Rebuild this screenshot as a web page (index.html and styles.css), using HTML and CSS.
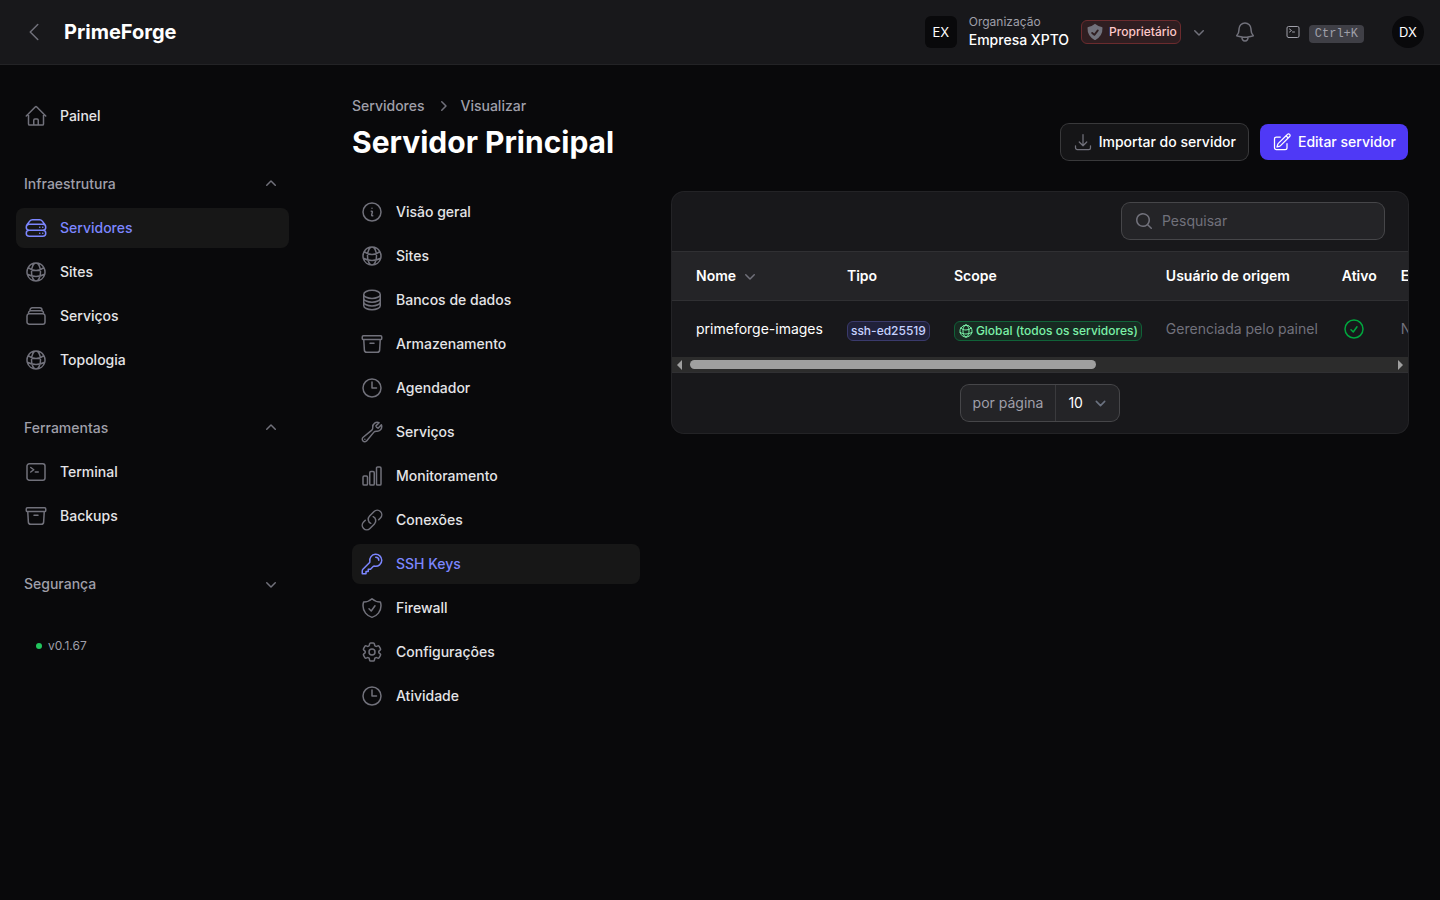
FILE: index.html
```html
<!DOCTYPE html>
<html lang="pt-BR">
<head>
  <meta charset="utf-8">
  <meta name="viewport" content="width=device-width, initial-scale=1.0">
  <title>Servidor Principal - PrimeForge</title>
  <link rel="stylesheet" href="styles.css">
</head>
<body>
  <!-- Icons -->
  <svg class="sprite" aria-hidden="true">
    <symbol id="i-home" viewBox="0 0 24 24"><path d="m2.25 12 8.954-8.955c.44-.439 1.152-.439 1.591 0L21.75 12M4.5 9.75v10.125c0 .621.504 1.125 1.125 1.125H9.75v-4.875c0-.621.504-1.125 1.125-1.125h2.25c.621 0 1.125.504 1.125 1.125V21h4.125c.621 0 1.125-.504 1.125-1.125V9.75M8.25 21h8.25"/></symbol>
    <symbol id="i-server" viewBox="0 0 24 24"><path d="M5.25 14.25h13.5m-13.5 0a3 3 0 0 1-3-3m3 3a3 3 0 1 0 0 6h13.5a3 3 0 1 0 0-6m-16.5-3a3 3 0 0 1 3-3h13.5a3 3 0 0 1 3 3m-19.5 0a4.5 4.5 0 0 1 .9-2.7L5.737 5.1a3.375 3.375 0 0 1 2.7-1.35h7.126c1.062 0 2.062.5 2.7 1.35l2.587 3.45a4.5 4.5 0 0 1 .9 2.7m0 0a3 3 0 0 1-3 3m0 3h.008v.008h-.008v-.008Zm0-6h.008v.008h-.008v-.008Zm-3 6h.008v.008h-.008v-.008Zm0-6h.008v.008h-.008v-.008Z"/></symbol>
    <symbol id="i-globe" viewBox="0 0 24 24"><path d="M12 21a9.004 9.004 0 0 0 8.716-6.747M12 21a9.004 9.004 0 0 1-8.716-6.747M12 21c2.485 0 4.5-4.03 4.5-9S14.485 3 12 3m0 18c-2.485 0-4.5-4.03-4.5-9S9.515 3 12 3m0 0a8.997 8.997 0 0 1 7.843 4.582M12 3a8.997 8.997 0 0 0-7.843 4.582m15.686 0A11.953 11.953 0 0 1 12 10.5c-2.998 0-5.74-1.1-7.843-2.918m15.686 0A8.959 8.959 0 0 1 21 12c0 .778-.099 1.533-.284 2.253m0 0A17.919 17.919 0 0 1 12 16.5c-3.162 0-6.133-.815-8.716-2.247m0 0A9.015 9.015 0 0 1 3 12c0-1.605.42-3.113 1.157-4.418"/></symbol>
    <symbol id="i-stack" viewBox="0 0 24 24"><path d="M6 6.878V6a2.25 2.25 0 0 1 2.25-2.25h7.5A2.25 2.25 0 0 1 18 6v.878m-12 0c.235-.083.487-.128.75-.128h10.5c.263 0 .515.045.75.128m-12 0A2.25 2.25 0 0 0 4.5 9v.878m13.5-3A2.25 2.25 0 0 1 19.5 9v.878m0 0a2.246 2.246 0 0 0-.75-.128H5.25c-.263 0-.515.045-.75.128m15 0A2.25 2.25 0 0 1 21 12v6a2.25 2.25 0 0 1-2.25 2.25H5.25A2.25 2.25 0 0 1 3 18v-6c0-.98.626-1.813 1.5-2.122"/></symbol>
    <symbol id="i-terminal" viewBox="0 0 24 24"><path d="m6.75 7.5 3 2.25-3 2.25m4.5 0h3m-9 8.25h13.5A2.25 2.25 0 0 0 21 18V6a2.25 2.25 0 0 0-2.25-2.25H5.25A2.25 2.25 0 0 0 3 6v12a2.25 2.25 0 0 0 2.25 2.25Z"/></symbol>
    <symbol id="i-archive" viewBox="0 0 24 24"><path d="m20.25 7.5-.625 10.632a2.25 2.25 0 0 1-2.247 2.118H6.622a2.25 2.25 0 0 1-2.247-2.118L3.75 7.5M10 11.25h4M3.375 7.5h17.25c.621 0 1.125-.504 1.125-1.125v-1.5c0-.621-.504-1.125-1.125-1.125H3.375c-.621 0-1.125.504-1.125 1.125v1.5c0 .621.504 1.125 1.125 1.125Z"/></symbol>
    <symbol id="i-info" viewBox="0 0 24 24"><path d="m11.25 11.25.041-.02a.75.75 0 0 1 1.063.852l-.708 2.836a.75.75 0 0 0 1.063.853l.041-.021M21 12a9 9 0 1 1-18 0 9 9 0 0 1 18 0Zm-9-3.75h.008v.008H12V8.25Z"/></symbol>
    <symbol id="i-database" viewBox="0 0 24 24"><path d="M20.25 6.375c0 2.278-3.694 4.125-8.25 4.125S3.75 8.653 3.75 6.375m16.5 0c0-2.278-3.694-4.125-8.25-4.125S3.75 4.097 3.75 6.375m16.5 0v11.25c0 2.278-3.694 4.125-8.25 4.125s-8.25-1.847-8.25-4.125V6.375m16.5 0v3.75m-16.5-3.75v3.75m16.5 0v3.75C20.25 16.153 16.556 18 12 18s-8.25-1.847-8.25-4.125v-3.75m16.5 0c0 2.278-3.694 4.125-8.25 4.125s-8.25-1.847-8.25-4.125"/></symbol>
    <symbol id="i-clock" viewBox="0 0 24 24"><path d="M12 6v6h4.5m4.5 0a9 9 0 1 1-18 0 9 9 0 0 1 18 0Z"/></symbol>
    <symbol id="i-wrench" viewBox="0 0 24 24"><path d="M21.75 6.75a4.5 4.5 0 0 1-4.884 4.484c-1.076-.091-2.264.071-2.95.904l-7.152 8.684a2.548 2.548 0 1 1-3.586-3.586l8.684-7.152c.833-.686.995-1.874.904-2.95a4.5 4.5 0 0 1 6.336-4.486l-3.276 3.276a3.004 3.004 0 0 0 2.25 2.25l3.276-3.276c.256.565.398 1.192.398 1.852Z"/><path d="M4.867 19.125h.008v.008h-.008v-.008Z"/></symbol>
    <symbol id="i-chart" viewBox="0 0 24 24"><path d="M3 13.125C3 12.504 3.504 12 4.125 12h2.25c.621 0 1.125.504 1.125 1.125v6.75C7.5 20.496 6.996 21 6.375 21h-2.25A1.125 1.125 0 0 1 3 19.875v-6.75ZM9.75 8.625c0-.621.504-1.125 1.125-1.125h2.25c.621 0 1.125.504 1.125 1.125v11.25c0 .621-.504 1.125-1.125 1.125h-2.25a1.125 1.125 0 0 1-1.125-1.125V8.625ZM16.5 4.125c0-.621.504-1.125 1.125-1.125h2.25C20.496 3 21 3.504 21 4.125v15.75c0 .621-.504 1.125-1.125 1.125h-2.25a1.125 1.125 0 0 1-1.125-1.125V4.125Z"/></symbol>
    <symbol id="i-link" viewBox="0 0 24 24"><path d="M13.19 8.688a4.5 4.5 0 0 1 1.242 7.244l-4.5 4.5a4.5 4.5 0 0 1-6.364-6.364l1.757-1.757m13.35-.622 1.757-1.757a4.5 4.5 0 0 0-6.364-6.364l-4.5 4.5a4.5 4.5 0 0 0 1.242 7.244"/></symbol>
    <symbol id="i-key" viewBox="0 0 24 24"><path d="M15.75 5.25a3 3 0 0 1 3 3m3 0a6 6 0 0 1-7.029 5.912c-.563-.097-1.159.026-1.563.43L10.5 17.25H8.25v2.25H6v2.25H2.25v-2.818c0-.597.237-1.17.659-1.591l6.499-6.499c.404-.404.527-1 .43-1.563A6 6 0 1 1 21.75 8.25Z"/></symbol>
    <symbol id="i-shield" viewBox="0 0 24 24"><path d="M9 12.75 11.25 15 15 9.75m-3-7.036A11.959 11.959 0 0 1 3.598 6 11.99 11.99 0 0 0 3 9.749c0 5.592 3.824 10.29 9 11.623 5.176-1.332 9-6.03 9-11.622 0-1.31-.21-2.571-.598-3.751h-.152c-3.196 0-6.1-1.248-8.25-3.285Z"/></symbol>
    <symbol id="i-cog" viewBox="0 0 24 24"><path d="M9.594 3.94c.09-.542.56-.94 1.11-.94h2.593c.55 0 1.02.398 1.11.94l.213 1.281c.063.374.313.686.645.87.074.04.147.083.22.127.325.196.72.257 1.075.124l1.217-.456a1.125 1.125 0 0 1 1.37.49l1.296 2.247a1.125 1.125 0 0 1-.26 1.431l-1.003.827c-.293.241-.438.613-.43.992a7.723 7.723 0 0 1 0 .255c-.008.378.137.75.43.991l1.004.827c.424.35.534.955.26 1.43l-1.298 2.247a1.125 1.125 0 0 1-1.369.491l-1.217-.456c-.355-.133-.75-.072-1.076.124a6.47 6.47 0 0 1-.22.128c-.331.183-.581.495-.644.869l-.213 1.281c-.09.543-.56.94-1.11.94h-2.594c-.55 0-1.019-.398-1.11-.94l-.213-1.281c-.062-.374-.312-.686-.644-.87a6.52 6.52 0 0 1-.22-.127c-.325-.196-.72-.257-1.076-.124l-1.217.456a1.125 1.125 0 0 1-1.369-.49l-1.297-2.247a1.125 1.125 0 0 1 .26-1.431l1.004-.827c.292-.24.437-.613.43-.991a6.932 6.932 0 0 1 0-.255c.007-.38-.138-.751-.43-.992l-1.004-.827a1.125 1.125 0 0 1-.26-1.43l1.297-2.247a1.125 1.125 0 0 1 1.37-.491l1.216.456c.356.133.751.072 1.076-.124.072-.044.146-.086.22-.128.332-.183.582-.495.644-.869l.214-1.28Z"/><path d="M15 12a3 3 0 1 1-6 0 3 3 0 0 1 6 0Z"/></symbol>
    <symbol id="i-bell" viewBox="0 0 24 24"><path d="M14.857 17.082a23.848 23.848 0 0 0 5.454-1.31A8.967 8.967 0 0 1 18 9.75V9A6 6 0 0 0 6 9v.75a8.967 8.967 0 0 1-2.312 6.022c1.733.64 3.56 1.085 5.455 1.31m5.714 0a24.255 24.255 0 0 1-5.714 0m5.714 0a3 3 0 1 1-5.714 0"/></symbol>
    <symbol id="i-check-circle" viewBox="0 0 24 24"><path d="M9 12.75 11.25 15 15 9.75M21 12a9 9 0 1 1-18 0 9 9 0 0 1 18 0Z"/></symbol>
    <symbol id="i-back" viewBox="0 0 24 24"><path d="M15.75 19.5 8.25 12l7.5-7.5"/></symbol>
    <symbol id="i-download" viewBox="0 0 24 24"><path d="M3 16.5v2.25A2.25 2.25 0 0 0 5.25 21h13.5A2.25 2.25 0 0 0 21 18.75V16.5M16.5 12 12 16.5m0 0L7.5 12m4.5 4.5V3"/></symbol>
    <symbol id="i-edit" viewBox="0 0 24 24"><path d="m16.862 4.487 1.687-1.688a1.875 1.875 0 1 1 2.652 2.652L10.582 16.07a4.5 4.5 0 0 1-1.897 1.13L6 18l.8-2.685a4.5 4.5 0 0 1 1.13-1.897l8.932-8.931Zm0 0L19.5 7.125M18 14v4.75A2.25 2.25 0 0 1 15.75 21H5.25A2.25 2.25 0 0 1 3 18.75V8.25A2.25 2.25 0 0 1 5.25 6H10"/></symbol>
    <symbol id="i-down" viewBox="0 0 20 20"><path d="M5.22 8.22a.75.75 0 0 1 1.06 0L10 11.94l3.72-3.72a.75.75 0 1 1 1.06 1.06l-4.25 4.25a.75.75 0 0 1-1.06 0L5.22 9.28a.75.75 0 0 1 0-1.06Z"/></symbol>
    <symbol id="i-up" viewBox="0 0 20 20"><path d="M9.47 6.47a.75.75 0 0 1 1.06 0l4.25 4.25a.75.75 0 1 1-1.06 1.06L10 8.06l-3.72 3.72a.75.75 0 0 1-1.06-1.06l4.25-4.25Z"/></symbol>
    <symbol id="i-right" viewBox="0 0 20 20"><path d="M8.22 5.22a.75.75 0 0 1 1.06 0l4.25 4.25a.75.75 0 0 1 0 1.06l-4.25 4.25a.75.75 0 0 1-1.06-1.06L11.94 10 8.22 6.28a.75.75 0 0 1 0-1.06Z"/></symbol>
    <symbol id="i-search" viewBox="0 0 20 20"><path fill-rule="evenodd" d="M9 3.5a5.5 5.5 0 1 0 0 11 5.5 5.5 0 0 0 0-11ZM2 9a7 7 0 1 1 12.452 4.391l3.328 3.329a.75.75 0 1 1-1.06 1.06l-3.329-3.328A7 7 0 0 1 2 9Z"/></symbol>
    <symbol id="i-shield-solid" viewBox="0 0 16 16"><path fill-rule="evenodd" d="M8.5 1.709a.75.75 0 0 0-1 0 8.963 8.963 0 0 1-4.84 2.217.75.75 0 0 0-.654.72 10.499 10.499 0 0 0 5.647 9.672.75.75 0 0 0 .694-.001 10.499 10.499 0 0 0 5.647-9.672.75.75 0 0 0-.654-.719A8.963 8.963 0 0 1 8.5 1.71Zm2.34 5.504a.75.75 0 0 0-1.18-.926L7.394 9.17l-1.156-.99a.75.75 0 1 0-.976 1.138l1.75 1.5a.75.75 0 0 0 1.078-.106l2.75-3.5Z"/></symbol>
  </svg>

  <header class="topbar">
    <button class="icon-btn" type="button" aria-label="Recolher menu"><svg class="icon"><use href="#i-back"/></svg></button>
    <a class="brand" href="#">PrimeForge</a>

    <div class="topbar-end">
      <button class="tenant" type="button">
        <span class="tenant-avatar">EX</span>
        <span class="tenant-text">
          <span class="tenant-label">Organização</span>
          <span class="tenant-name">Empresa XPTO</span>
        </span>
        <span class="role-badge"><svg class="icon-solid"><use href="#i-shield-solid"/></svg>Proprietário</span>
        <svg class="icon-solid tenant-caret"><use href="#i-down"/></svg>
      </button>
      <button class="icon-btn" type="button" aria-label="Notificações"><svg class="icon"><use href="#i-bell"/></svg></button>
      <button class="shortcut" type="button" aria-label="Terminal"><svg class="icon icon-sm"><use href="#i-terminal"/></svg><span><kbd>Ctrl+K</kbd></span></button>
      <button class="user-avatar" type="button">DX</button>
    </div>
  </header>

  <div class="layout">
    <nav class="sidebar" aria-label="Principal">
      <ul class="nav-list">
        <li><a class="nav-item" href="#"><svg class="icon"><use href="#i-home"/></svg>Painel</a></li>
      </ul>

      <div class="nav-group">
        <button class="nav-label" type="button">Infraestrutura<svg class="icon-solid"><use href="#i-up"/></svg></button>
        <ul class="nav-list">
          <li><a class="nav-item active" href="#"><svg class="icon"><use href="#i-server"/></svg>Servidores</a></li>
          <li><a class="nav-item" href="#"><svg class="icon"><use href="#i-globe"/></svg>Sites</a></li>
          <li><a class="nav-item" href="#"><svg class="icon"><use href="#i-stack"/></svg>Serviços</a></li>
          <li><a class="nav-item" href="#"><svg class="icon"><use href="#i-globe"/></svg>Topologia</a></li>
        </ul>
      </div>

      <div class="nav-group">
        <button class="nav-label" type="button">Ferramentas<svg class="icon-solid"><use href="#i-up"/></svg></button>
        <ul class="nav-list">
          <li><a class="nav-item" href="#"><svg class="icon"><use href="#i-terminal"/></svg>Terminal</a></li>
          <li><a class="nav-item" href="#"><svg class="icon"><use href="#i-archive"/></svg>Backups</a></li>
        </ul>
      </div>

      <div class="nav-group">
        <button class="nav-label" type="button">Segurança<svg class="icon-solid"><use href="#i-down"/></svg></button>
      </div>

      <div class="version"><span class="version-dot"></span>v0.1.67</div>
    </nav>

    <main class="main">
      <nav class="breadcrumbs" aria-label="Trilha">
        <a href="#">Servidores</a>
        <svg class="icon-solid"><use href="#i-right"/></svg>
        <a href="#">Visualizar</a>
      </nav>

      <div class="page-header">
        <h1>Servidor Principal</h1>
        <div class="actions">
          <button class="btn btn-gray" type="button"><svg class="icon"><use href="#i-download"/></svg>Importar do servidor</button>
          <button class="btn btn-primary" type="button"><svg class="icon"><use href="#i-edit"/></svg>Editar servidor</button>
        </div>
      </div>

      <div class="page-body">
        <nav class="subnav" aria-label="Servidor">
          <ul class="nav-list">
            <li><a class="nav-item" href="#"><svg class="icon"><use href="#i-info"/></svg>Visão geral</a></li>
            <li><a class="nav-item" href="#"><svg class="icon"><use href="#i-globe"/></svg>Sites</a></li>
            <li><a class="nav-item" href="#"><svg class="icon"><use href="#i-database"/></svg>Bancos de dados</a></li>
            <li><a class="nav-item" href="#"><svg class="icon"><use href="#i-archive"/></svg>Armazenamento</a></li>
            <li><a class="nav-item" href="#"><svg class="icon"><use href="#i-clock"/></svg>Agendador</a></li>
            <li><a class="nav-item" href="#"><svg class="icon"><use href="#i-wrench"/></svg>Serviços</a></li>
            <li><a class="nav-item" href="#"><svg class="icon"><use href="#i-chart"/></svg>Monitoramento</a></li>
            <li><a class="nav-item" href="#"><svg class="icon"><use href="#i-link"/></svg>Conexões</a></li>
            <li><a class="nav-item active" href="#"><svg class="icon"><use href="#i-key"/></svg>SSH Keys</a></li>
            <li><a class="nav-item" href="#"><svg class="icon"><use href="#i-shield"/></svg>Firewall</a></li>
            <li><a class="nav-item" href="#"><svg class="icon"><use href="#i-cog"/></svg>Configurações</a></li>
            <li><a class="nav-item" href="#"><svg class="icon"><use href="#i-clock"/></svg>Atividade</a></li>
          </ul>
        </nav>

        <section class="card">
          <div class="toolbar">
            <label class="search">
              <svg class="icon-solid"><use href="#i-search"/></svg>
              <input type="search" placeholder="Pesquisar" aria-label="Pesquisar">
            </label>
          </div>

          <div class="table-wrap" id="keys-table">
            <table class="table">
              <thead>
                <tr>
                  <th><button class="sort" type="button">Nome<svg class="icon-solid"><use href="#i-down"/></svg></button></th>
                  <th>Tipo</th>
                  <th>Scope</th>
                  <th>Usuário de origem</th>
                  <th>Ativo</th>
                  <th>Expira em</th>
                  <th class="col-actions"></th>
                </tr>
              </thead>
              <tbody>
                <tr>
                  <td>primeforge-images</td>
                  <td><div class="cell-badge"><span class="badge badge-indigo">ssh-ed25519</span></div></td>
                  <td><div class="cell-badge"><span class="badge badge-green"><svg class="icon"><use href="#i-globe"/></svg>Global (todos os servidores)</span></div></td>
                  <td class="muted">Gerenciada pelo painel</td>
                  <td><svg class="icon icon-success"><use href="#i-check-circle"/></svg></td>
                  <td class="muted">Nunca</td>
                  <td class="col-actions"></td>
                </tr>
              </tbody>
            </table>
          </div>
          <div class="scrollbar" role="scrollbar" aria-controls="keys-table" aria-orientation="horizontal" aria-valuenow="0">
            <span class="scroll-arrow scroll-left"></span>
            <div class="scroll-track"><div class="scroll-thumb"></div></div>
            <span class="scroll-arrow scroll-right"></span>
          </div>

          <div class="pagination">
            <div class="per-page">
              <label for="per-page">por página</label>
              <select id="per-page">
                <option>5</option>
                <option selected>10</option>
                <option>25</option>
                <option>50</option>
              </select>
            </div>
          </div>
        </section>
      </div>
    </main>
  </div>
</body>
</html>
```
FILE: styles.css
```css
:root {
  color-scheme: dark;
  --background: #09090b;
  --surface: #18181b;
  --raised: #242427;
  --hover: #171717;
  --border: #303033;
  --ring: #232326;
  --input-ring: #464649;
  --foreground: #ffffff;
  --text: #e4e4e7;
  --label: #9f9fa9;
  --muted: #71717b;
  --primary: #4f39f6;
  --primary-text: #7c86ff;
  --radius: 8px;
}

* {
  margin: 0;
  padding: 0;
  box-sizing: border-box;
}

body {
  min-height: 100vh;
  font-family: Inter, "Liberation Sans", sans-serif;
  font-size: 14px;
  line-height: 20px;
  background-color: var(--background);
  color: var(--foreground);
}

a {
  color: inherit;
  text-decoration: none;
}

ul {
  list-style: none;
}

button,
input,
select {
  font: inherit;
  color: inherit;
  background: none;
  border: none;
  outline: none;
}

button {
  cursor: pointer;
}

.sprite {
  display: none;
}

.icon {
  width: 24px;
  height: 24px;
  flex-shrink: 0;
  fill: none;
  stroke: currentColor;
  stroke-width: 1.5;
  stroke-linecap: round;
  stroke-linejoin: round;
  color: var(--muted);
}

.icon-solid {
  width: 20px;
  height: 20px;
  flex-shrink: 0;
  fill: currentColor;
  color: var(--muted);
}

.icon-sm {
  width: 16px;
  height: 16px;
}

.icon-success {
  display: block;
  color: #00a63e;
}

/* Topbar */

.topbar {
  display: flex;
  align-items: center;
  height: 64px;
  padding: 0 16px;
  background-color: var(--surface);
  box-shadow: 0 0 0 1px var(--ring);
}

.icon-btn {
  display: flex;
  align-items: center;
  justify-content: center;
  width: 36px;
  height: 36px;
}

.brand {
  margin-left: 12px;
  font-size: 20px;
  font-weight: 700;
}

.topbar-end {
  display: flex;
  align-items: center;
  margin-left: auto;
}

.tenant {
  display: flex;
  align-items: center;
  gap: 12px;
  margin-right: 18px;
  text-align: left;
}

.tenant-avatar,
.user-avatar {
  display: flex;
  align-items: center;
  justify-content: center;
  width: 32px;
  height: 32px;
  font-size: 13px;
  background-color: var(--background);
}

.tenant-avatar {
  border-radius: 6px;
}

.user-avatar {
  border-radius: 50%;
}

.tenant-text {
  display: flex;
  flex-direction: column;
}

.tenant-label {
  font-size: 12px;
  line-height: 16px;
  color: var(--label);
}

.tenant-name {
  font-weight: 500;
}

.role-badge {
  display: flex;
  align-items: center;
  gap: 4px;
  height: 24px;
  padding: 0 3px;
  border: 1px solid #6b2b2e;
  border-radius: 6px;
  background-color: #2f1e21;
  font-size: 12px;
  font-weight: 500;
  color: #ffc9c9;
}

.tenant-caret {
  margin-left: -4px;
}

.shortcut {
  display: flex;
  align-items: center;
  gap: 8px;
  margin: 0 28px 0 22px;
}

.shortcut .icon {
  color: var(--label);
}

kbd {
  padding: 2px 6px;
  border-radius: 4px;
  background-color: #3f3f46;
  font-family: "Liberation Mono", monospace;
  font-size: 12px;
  line-height: 16px;
  color: var(--label);
}

/* Layout */

.layout {
  display: flex;
}

.sidebar {
  display: flex;
  flex-direction: column;
  gap: 28px;
  flex: 0 0 320px;
  padding: 32px 31px 32px 16px;
}

.nav-list {
  display: flex;
  flex-direction: column;
  gap: 4px;
}

.nav-group {
  display: flex;
  flex-direction: column;
  gap: 4px;
}

.nav-item {
  display: flex;
  align-items: center;
  gap: 12px;
  height: 40px;
  padding: 0 8px;
  border-radius: var(--radius);
  font-weight: 500;
  color: var(--text);
}

.nav-item.active,
.nav-item:hover {
  background-color: var(--hover);
}

.nav-item.active,
.nav-item.active .icon {
  color: var(--primary-text);
}

.nav-label {
  display: flex;
  align-items: center;
  justify-content: space-between;
  height: 40px;
  padding: 0 8px;
  font-weight: 500;
  color: var(--label);
}

.version {
  display: flex;
  align-items: center;
  gap: 6px;
  padding: 6px 20px;
  font-size: 12px;
  line-height: 16px;
  color: var(--label);
}

.version-dot {
  width: 6px;
  height: 6px;
  border-radius: 50%;
  background-color: #22c55e;
}

.main {
  flex: 1;
  min-width: 0;
  padding: 32px;
}

.breadcrumbs {
  display: flex;
  align-items: center;
  gap: 8px;
  margin-bottom: 8px;
  font-weight: 500;
  color: var(--label);
}

.page-header {
  display: flex;
  align-items: center;
  justify-content: space-between;
  margin-bottom: 32px;
}

h1 {
  font-size: 30px;
  line-height: 36px;
  font-weight: 700;
}

.actions {
  display: flex;
  gap: 12px;
}

.btn {
  display: flex;
  align-items: center;
  gap: 6px;
  height: 36px;
  padding: 0 12px;
  border-radius: var(--radius);
  font-weight: 500;
}

.btn .icon {
  width: 20px;
  height: 20px;
}

.btn-gray {
  background-color: #151517;
  box-shadow: 0 0 0 1px #39393b;
}

.btn-primary {
  background-color: var(--primary);
}

.btn-primary .icon {
  color: var(--foreground);
}

.page-body {
  display: flex;
  align-items: flex-start;
  gap: 32px;
}

.subnav {
  flex: 0 0 288px;
}

/* Table card */

.card {
  flex: 1;
  min-width: 0;
  border-radius: 12px;
  background-color: var(--surface);
  box-shadow: 0 0 0 1px var(--ring);
  overflow: hidden;
}

.toolbar {
  display: flex;
  justify-content: flex-end;
  padding: 11px 24px 12px;
  border-bottom: 1px solid var(--border);
}

.search {
  display: flex;
  align-items: center;
  gap: 8px;
  width: 262px;
  height: 36px;
  padding: 0 12px;
  border-radius: var(--radius);
  background-color: var(--raised);
  box-shadow: 0 0 0 1px var(--input-ring);
}

.search input {
  flex: 1;
  min-width: 0;
}

.search input::placeholder {
  color: var(--muted);
}

.table-wrap {
  overflow-x: auto;
  scrollbar-width: none;
}

.table {
  width: max-content;
  min-width: 100%;
  border-collapse: separate;
  border-spacing: 0;
  text-align: left;
}

.table th,
.table td {
  padding: 0 12px;
  white-space: nowrap;
}

.table th:first-child,
.table td:first-child {
  padding-left: 24px;
}

.table th {
  height: 49px;
  border-bottom: 1px solid var(--border);
  background-color: var(--raised);
  font-weight: 600;
}

.table td {
  height: 56px;
}

.table .col-actions {
  width: 360px;
}

.sort {
  display: flex;
  align-items: center;
  gap: 4px;
  font-weight: 600;
}

.muted {
  color: var(--muted);
}

.cell-badge {
  display: flex;
  align-items: flex-end;
  height: 24px;
}

.badge {
  display: flex;
  align-items: center;
  gap: 2px;
  height: 20px;
  padding: 0 3px;
  border: 1px solid;
  border-radius: 6px;
  font-size: 12px;
  line-height: 16px;
  font-weight: 500;
}

.badge .icon {
  width: 16px;
  height: 16px;
  color: inherit;
}

.badge-indigo {
  border-color: #3a3a6c;
  background-color: #20213a;
  color: #c6d2ff;
}

.badge-green {
  border-color: #106238;
  background-color: #182a22;
  color: #7bf1a8;
}

.scrollbar {
  display: flex;
  align-items: center;
  gap: 8px;
  height: 16px;
  padding: 0 5px;
  border-bottom: 1px solid var(--border);
  background-color: #2c2c2c;
}

.scroll-track {
  flex: 1;
}

.scroll-thumb {
  width: 58%;
  height: 9px;
  border-radius: 5px;
  background-color: #9f9f9f;
}

.scroll-arrow {
  border: 5px solid transparent;
}

.scroll-left {
  border-left-width: 0;
  border-right-color: #9f9f9f;
}

.scroll-right {
  border-right-width: 0;
  border-left-color: #9f9f9f;
}

.pagination {
  display: flex;
  justify-content: center;
  padding: 12px 24px;
}

.per-page {
  display: flex;
  height: 36px;
  border-radius: var(--radius);
  background-color: var(--raised);
  box-shadow: 0 0 0 1px var(--input-ring);
}

.per-page label {
  display: flex;
  align-items: center;
  padding: 0 12px;
  border-right: 1px solid #3a3a3d;
  color: var(--label);
}

.per-page select {
  width: 63px;
  padding: 0 12px;
  appearance: none;
  background: url("data:image/svg+xml,%3Csvg xmlns='http://www.w3.org/2000/svg' fill='none' viewBox='0 0 20 20'%3E%3Cpath stroke='%236b7280' stroke-linecap='round' stroke-linejoin='round' stroke-width='1.5' d='m6 8 4 4 4-4'/%3E%3C/svg%3E") no-repeat right 8px center / 21px;
}
```
